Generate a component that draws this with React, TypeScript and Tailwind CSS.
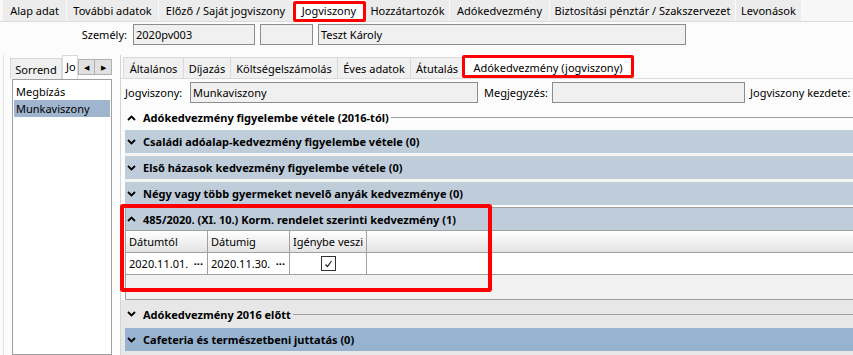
import React from "react";

const Chev = ({ up }: { up: boolean }) => (
  <svg width="9" height="6" viewBox="0 0 9 6" className="shrink-0">
    <polyline
      points={up ? "1,5 4.5,1.5 8,5" : "1,1 4.5,4.5 8,1"}
      fill="none"
      stroke="#000"
      strokeWidth="1.8"
    />
  </svg>
);

const topTabs: [string, number, boolean][] = [
  ["Alap adat", 64, false],
  ["További adatok", 92, false],
  ["Előző / Saját jogviszony", 134, false],
  ["Jogviszony", 73, true],
  ["Hozzátartozók", 84, false],
  ["Adókedvezmény", 100, false],
  ["Biztosítási pénztár / Szakszervezet", 186, false],
  ["Levonások", 66, false],
];

const subTabs: [string, number, boolean][] = [
  ["Általános", 61, false],
  ["Díjazás", 48, false],
  ["Költségelszámolás", 108, false],
  ["Éves adatok", 74, false],
  ["Átutalás", 54, false],
  ["Adókedvezmény (jogviszony)", 168, true],
];

const Bar = ({ text, dark }: { text: string; dark?: boolean }) => (
  <div
    className={`h-[23px] flex items-center pl-[2px] gap-[6px] font-bold ${
      dark ? "bg-[#97b3d0]" : "bg-[#bfcddb]"
    }`}
  >
    <Chev up={false} />
    <span className="ml-[1px] whitespace-nowrap">{text}</span>
  </div>
);

export default function App() {
  return (
    <div
      className="w-[853px] h-[355px] overflow-hidden bg-[#fcfcfc] text-[11px] leading-[15px] text-black flex flex-col"
      style={{ fontFamily: '"Noto Sans", "Open Sans", sans-serif' }}
    >
      {/* top tabs */}
      <div className="h-[22px] shrink-0 flex bg-[#f7f7f7] border-b border-[#dcdcdc] pl-[3px]">
        {topTabs.map(([t, w, sel]) => (
          <div
            key={t}
            style={{ width: w }}
            className={`relative h-[21px] flex items-center justify-center border-r border-[#fafafa] ${
              sel ? "bg-white" : "bg-[#ececec]"
            }`}
          >
            <span className="whitespace-nowrap">{t}</span>
            {sel && (
              <div className="absolute left-0 top-[1px] w-[73px] h-[21px] border-[3px] border-[#ff0000] rounded-[2px]" />
            )}
          </div>
        ))}
      </div>

      {/* person row */}
      <div className="h-[30px] shrink-0 flex items-start pt-[2px]">
        <div className="w-[128px] text-right pr-[1px] h-[21px] flex items-center justify-end">Személy:</div>
        <div className="ml-[5px] w-[122px] h-[21px] border border-[#8c8c8c] bg-[#f0f0f0] flex items-center px-[2px]">
          2020pv003
        </div>
        <div className="ml-[5px] w-[53px] h-[21px] border border-[#8c8c8c] bg-[#f0f0f0]" />
        <div className="ml-[5px] w-[368px] h-[21px] border border-[#8c8c8c] bg-[#f0f0f0] flex items-center px-[2px]">
          Teszt Károly
        </div>
      </div>

      {/* main */}
      <div className="flex-1 flex min-h-0 pt-[3px]">
        {/* left panel */}
        <div className="w-[117px] shrink-0 flex flex-col pl-[9px] border-l border-[#e2e2e2] ml-[3px]">
          <div className="h-[24px] flex items-end relative -ml-[3px]">
            <div className="w-[52px] h-[21px] bg-[#f0f0f0] border border-[#d9d9d9] border-b-0 flex items-center justify-center">
              Sorrend
            </div>
            <div className="w-[16px] h-[24px] bg-white border border-[#d9d9d9] border-b-0 pl-[3px] pt-[3px] whitespace-nowrap">
              Jo
            </div>
            <div className="absolute left-[68px] top-[4px] flex">
              <div className="w-[17px] h-[16px] bg-[#e1e1e1] border border-[#b0b0b0] flex items-center justify-center text-[7px] leading-none">
                ◀
              </div>
              <div className="w-[17px] h-[16px] bg-[#e1e1e1] border border-[#b0b0b0] border-l-0 flex items-center justify-center text-[7px] leading-none">
                ▶
              </div>
            </div>
          </div>
          <div className="flex-1 w-[100px] -ml-[1px] border border-[#a0a0a0] bg-white pt-[3px] px-[1px]">
            <div className="h-[17px] pl-[2px] flex items-center">Megbízás</div>
            <div className="h-[17px] pl-[2px] flex items-center bg-[#9fb4cd]">Munkaviszony</div>
          </div>
        </div>

        {/* right panel */}
        <div className="flex-1 flex flex-col min-w-0 border-l border-[#d4d4d4] bg-[#f4f4f4]">
          <div className="h-[24px] shrink-0 flex items-end pl-[2px] border-b border-[#dadada] bg-[#fcfcfc]">
            {subTabs.map(([t, w, sel]) => (
              <div
                key={t}
                style={{ width: w }}
                className={`relative flex items-center justify-center border border-b-0 whitespace-nowrap ${
                  sel
                    ? "h-[23px] bg-white border-[#d9d9d9] ml-[1px]"
                    : "h-[21px] bg-[#f0f0f0] border-[#d9d9d9] -mr-px"
                }`}
              >
                {t}
                {sel && (
                  <div className="absolute -left-[3px] -top-[1px] w-[172px] h-[23px] border-[3px] border-[#ff0000] rounded-[2px]" />
                )}
              </div>
            ))}
          </div>

          <div className="flex-1 bg-[#fcfcfc] pl-[4px] flex flex-col">
            {/* form row */}
            <div className="h-[21px] mt-[3px] flex items-center shrink-0 whitespace-nowrap">
              <div className="w-[65px]">Jogviszony:</div>
              <div className="w-[288px] h-[21px] border border-[#8c8c8c] bg-[#f0f0f0] flex items-center px-[2px]">
                Munkaviszony
              </div>
              <div className="w-[74px] pl-[6px]">Megjegyzés:</div>
              <div className="w-[193px] h-[21px] border border-[#8c8c8c] bg-[#f0f0f0]" />
              <div className="pl-[5px]">Jogviszony kezdete:</div>
            </div>

            {/* section 1 */}
            <div className="h-[19px] mt-[5px] flex items-center gap-[6px] pl-[2px] font-bold shrink-0">
              <Chev up={true} />
              <span className="ml-[1px] whitespace-nowrap">Adókedvezmény figyelembe vétele (2016-tól)</span>
              <div className="flex-1 h-px bg-[#a0a0a0] ml-[-4px]" />
            </div>

            <div className="mt-[3px] flex flex-col gap-[3px] bg-[#f3f3f3] shrink-0">
              <Bar text="Családi adóalap-kedvezmény figyelembe vétele (0)" />
              <Bar text="Első házasok kedvezmény figyelembe vétele (0)" />
              <Bar text="Négy vagy több gyermeket nevelő anyák kedvezménye (0)" />
            </div>

            {/* 485 group */}
            <div className="relative mt-[2px] shrink-0 border border-[#a0a0a0] border-r-0 bg-[#f2f2f2] h-[93px] flex flex-col">
              <div className="h-[23px] bg-[#bfcddb] flex items-center gap-[6px] pl-[1px] font-bold border-b border-[#a0a0a0]">
                <Chev up={true} />
                <span className="ml-[1px]">485/2020. (XI. 10.) Korm. rendelet szerinti kedvezmény (1)</span>
              </div>
              <div className="h-[22px] flex bg-linear-to-b from-white to-[#e3e3e3] border-b border-[#a0a0a0]">
                <div className="w-[82px] border-r border-[#a0a0a0] flex items-center pl-[3px]">Dátumtól</div>
                <div className="w-[82px] border-r border-[#a0a0a0] flex items-center pl-[3px]">Dátumig</div>
                <div className="w-[77px] border-r border-[#a0a0a0] flex items-center justify-center whitespace-nowrap">
                  Igénybe veszi
                </div>
              </div>
              <div className="h-[22px] flex bg-white border-b border-[#a0a0a0]">
                <div className="w-[82px] border-r border-[#a0a0a0] flex items-center pl-[3px] pr-[4px] justify-between">
                  <span>2020.11.01.</span>
                  <span className="font-bold">···</span>
                </div>
                <div className="w-[82px] border-r border-[#a0a0a0] flex items-center pl-[3px] pr-[4px] justify-between">
                  <span>2020.11.30.</span>
                  <span className="font-bold">···</span>
                </div>
                <div className="w-[77px] border-r border-[#a0a0a0] flex items-center justify-center">
                  <div className="w-[15px] h-[15px] border border-[#333] bg-white flex items-center justify-center">
                    <svg width="9" height="8" viewBox="0 0 9 8">
                      <polyline points="1.5,4.5 3.5,6.5 7.5,1" fill="none" stroke="#222" strokeWidth="1.2" />
                    </svg>
                  </div>
                </div>
              </div>
              <div className="absolute -left-[6px] -top-[4px] w-[372px] h-[88px] border-[4px] border-[#ff0000] rounded-[3px]" />
            </div>

            {/* lower area */}
            <div className="flex-1 bg-[#e7e7e7] flex flex-col -ml-[4px] pl-[4px]">
              <div className="h-[28px] flex items-center gap-[6px] pl-[2px] font-bold shrink-0">
                <Chev up={false} />
                <span className="ml-[1px] whitespace-nowrap">Adókedvezmény 2016 előtt</span>
                <div className="flex-1 h-px bg-[#a0a0a0] ml-[-4px]" />
              </div>
              <Bar text="Cafeteria és természetbeni juttatás (0)" dark />
            </div>
          </div>
        </div>
      </div>
    </div>
  );
}
